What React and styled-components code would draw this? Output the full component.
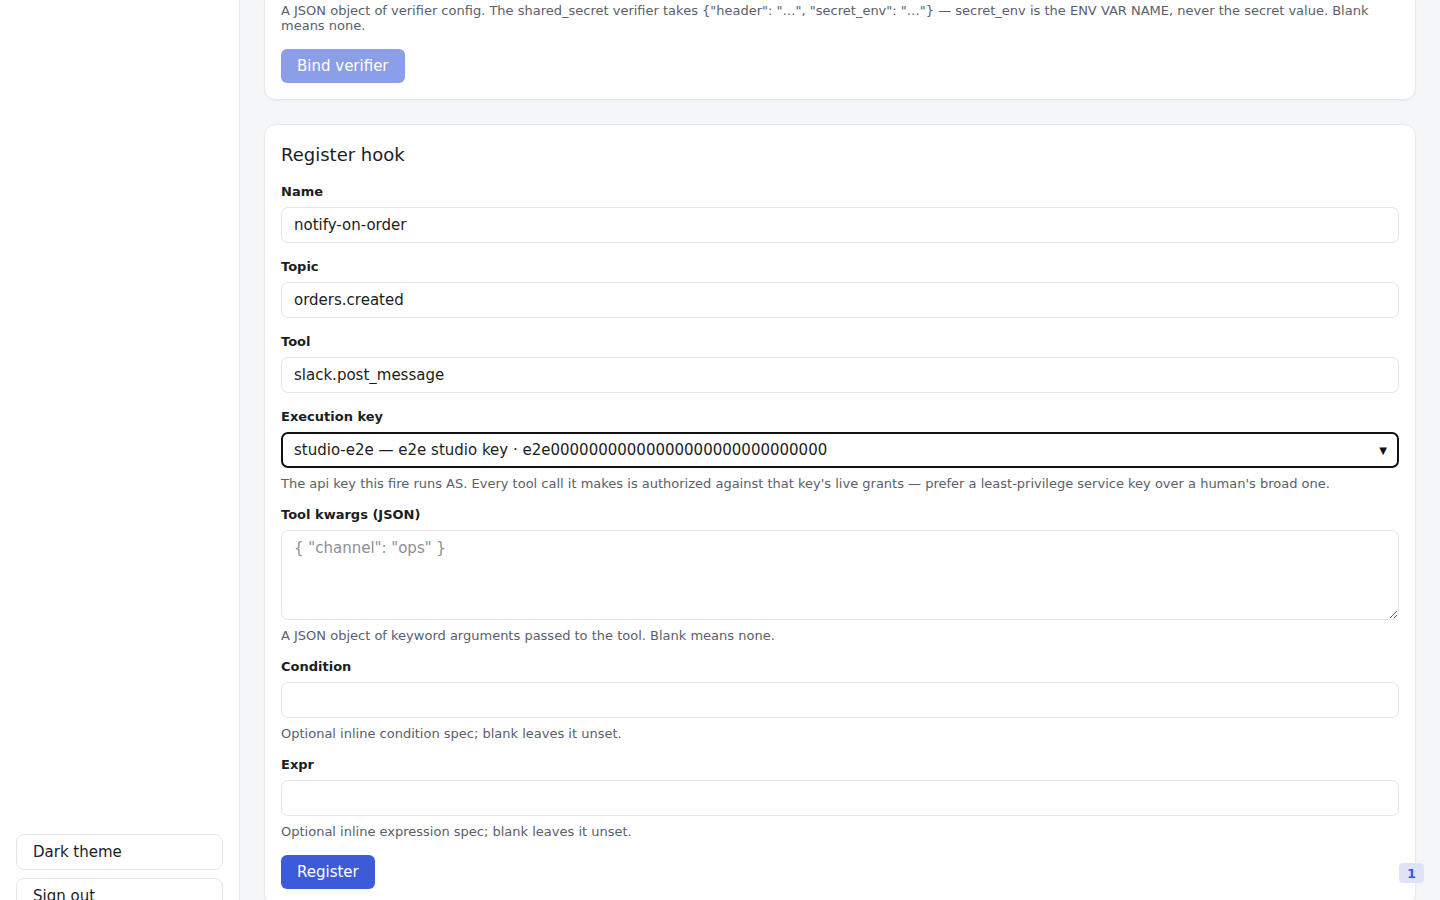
import React from "react";
import styled, { createGlobalStyle, css } from "styled-components";

const GlobalStyle = createGlobalStyle`
    html, body {
        margin: 0;
        padding: 0;
        height: 100%;
        overflow: hidden;
    }

    body {
        font-family: "DejaVu Sans", "Noto Sans", sans-serif;
        color: #1b1d21;
        background: #f5f6f8;
    }

    * {
        box-sizing: border-box;
    }
`

const Shell = styled.div`
    display: flex;
    width: 100vw;
    height: 100vh;
    overflow: hidden;
`

const Sidebar = styled.aside`
    width: 240px;
    flex-shrink: 0;
    height: 100%;
    background: #ffffff;
    border-right: 1px solid #e6e8ec;
    display: flex;
    flex-direction: column;
    justify-content: flex-end;
    padding: 0 16px;
    overflow: hidden;
`

const SidebarFooter = styled.div`
    display: flex;
    flex-direction: column;
    flex-shrink: 0;
    gap: 8px;
    margin-bottom: -14px;
`

const SideButton = styled.button`
    width: 100%;
    height: 36px;
    flex-shrink: 0;
    padding: 0 16px;
    text-align: left;
    font-family: inherit;
    font-size: 15px;
    color: #1b1d21;
    background: #ffffff;
    border: 1px solid #e3e5ea;
    border-radius: 8px;
    cursor: pointer;
`

const Main = styled.main`
    flex: 1;
    height: 100%;
    overflow: hidden;
    padding: 0 24px;
    display: flex;
    flex-direction: column;
    gap: 24px;
`

const Card = styled.section`
    flex-shrink: 0;
    background: #ffffff;
    border: 1px solid #e6e8ec;
    border-radius: 12px;
    box-shadow: 0 1px 2px rgba(17, 24, 39, 0.04);
    padding: 17px 16px 16px;
    display: flex;
    flex-direction: column;

    ${({ clipped }) => clipped && css`
        border-top: none;
        border-top-left-radius: 0;
        border-top-right-radius: 0;
        padding-top: 3px;
    `}
`

const CardTitle = styled.h2`
    margin: 0 0 15px;
    font-size: 18px;
    line-height: 26px;
    font-weight: 400;
    color: #1b1d21;
`

const Fields = styled.div`
    display: flex;
    flex-direction: column;
    gap: 15px;
`

const Field = styled.div`
    display: flex;
    flex-direction: column;
`

const Label = styled.label`
    padding-top: 1px;
    font-size: 13px;
    line-height: 16px;
    font-weight: 700;
    color: #1b1d21;
    margin-bottom: 7px;
`

const fieldBase = css`
    width: 100%;
    flex-shrink: 0;
    font-family: inherit;
    font-size: 15px;
    color: #1b1d21;
    background: #ffffff;
    border: 1px solid #e3e5ea;
    border-radius: 7px;
    padding: 0 12px;
    outline: none;
`

const Input = styled.input`
    ${fieldBase}
    height: 36px;
`

const TextArea = styled.textarea`
    ${fieldBase}
    height: 90px;
    padding: 8px 12px;
    line-height: 18px;
    resize: vertical;

    &::placeholder {
        color: #8a8f98;
    }
`

const SelectWrap = styled.div`
    position: relative;

    &::after {
        content: "▼";
        position: absolute;
        right: 12px;
        top: 50%;
        transform: translateY(-50%);
        font-size: 10px;
        color: #111111;
        pointer-events: none;
    }
`

const Select = styled.select`
    ${fieldBase}
    height: 36px;
    appearance: none;
    border: 2px solid #111111;
    border-radius: 7px;
    padding: 0 11px;
`

const Help = styled.p`
    margin: ${({ flush }) => (flush ? "0" : "8px 0 0")};
    font-size: 13px;
    line-height: 15px;
    color: #5a606b;
`

const Button = styled.button`
    align-self: flex-start;
    flex-shrink: 0;
    height: 34px;
    padding: 0 16px;
    font-family: inherit;
    font-size: 15px;
    color: #ffffff;
    border: none;
    border-radius: 6px;
    background: ${({ disabled }) => (disabled ? "#8b9ee8" : "#3b5bdb")};
    margin-top: ${({ gap }) => gap || 0}px;
    cursor: ${({ disabled }) => (disabled ? "default" : "pointer")};
`

const CountBadge = styled.span`
    position: fixed;
    right: 16px;
    bottom: 17px;
    min-width: 25px;
    height: 20px;
    padding: 0 6px;
    display: flex;
    align-items: center;
    justify-content: center;
    font-size: 13px;
    font-weight: 700;
    color: #3b5bdb;
    background: #dfe3f8;
    border-radius: 4px;
`

const KEY_OPTION = "studio-e2e — e2e studio key · e2e" + "0".repeat(29);

const TextField = ({ label, value, help }) => (
    <Field>
        <Label>{label}</Label>
        <Input defaultValue={value} />
        {help && <Help>{help}</Help>}
    </Field>
)

const App = () => {
    return (
        <>
            <GlobalStyle />
            <Shell>
                <Sidebar>
                    <SidebarFooter>
                        <SideButton>Dark theme</SideButton>
                        <SideButton>Sign out</SideButton>
                    </SidebarFooter>
                </Sidebar>

                <Main>
                    <Card clipped>
                        <Help flush>
                            A JSON object of verifier config. The shared_secret verifier takes {'{"header": "…", "secret_env": "…"}'} — secret_env is the ENV VAR NAME, never the secret value. Blank means none.
                        </Help>
                        <Button disabled gap={16}>Bind verifier</Button>
                    </Card>

                    <Card>
                        <CardTitle>Register hook</CardTitle>
                        <Fields>
                            <TextField label="Name" value="notify-on-order" />
                            <TextField label="Topic" value="orders.created" />
                            <TextField label="Tool" value="slack.post_message" />

                            <Field>
                                <Label>Execution key</Label>
                                <SelectWrap>
                                    <Select defaultValue={KEY_OPTION}>
                                        <option>{KEY_OPTION}</option>
                                    </Select>
                                </SelectWrap>
                                <Help>
                                    The api key this fire runs AS. Every tool call it makes is authorized against that key's live grants — prefer a least-privilege service key over a human's broad one.
                                </Help>
                            </Field>

                            <Field>
                                <Label>Tool kwargs (JSON)</Label>
                                <TextArea placeholder={'{ "channel": "ops" }'} />
                                <Help>A JSON object of keyword arguments passed to the tool. Blank means none.</Help>
                            </Field>

                            <TextField
                                label="Condition"
                                value=""
                                help="Optional inline condition spec; blank leaves it unset."
                            />
                            <TextField
                                label="Expr"
                                value=""
                                help="Optional inline expression spec; blank leaves it unset."
                            />

                            <Button gap={1}>Register</Button>
                        </Fields>
                    </Card>
                </Main>
            </Shell>
            <CountBadge>1</CountBadge>
        </>
    )
}

export default App
